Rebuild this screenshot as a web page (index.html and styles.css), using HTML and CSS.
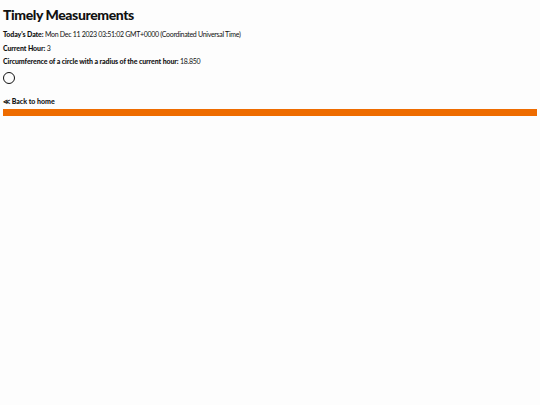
FILE: index.html
```html
<!DOCTYPE html>
<html>
<head>
<meta charset="utf-8">
<link rel="stylesheet" href="styles.css">
</head>
<body>
<main class="page">
  <h1 class="title">Timely Measurements</h1>
  <p class="line"><b>Today's Date:</b> Mon Dec 11 2023 03:51:02 GMT+0000 (Coordinated Universal Time)</p>
  <p class="line"><b>Current Hour:</b> 3</p>
  <p class="line"><b>Circumference of a circle with a radius of the current hour:</b> 18.850</p>
  <div class="circle"></div>
  <a class="back" href="#">&#x226A; Back to home</a>
  <div class="bar"></div>
</main>
</body>
</html>
```

FILE: styles.css
```css
html, body {
  margin: 0;
  padding: 0;
  background: #fdfdfd;
}
.page {
  padding: 6px 3px;
  font-family: Lato, "Liberation Sans", sans-serif;
  color: #111;
  display: flex;
  flex-direction: column;
  align-items: flex-start;
}
.title {
  font-size: 14px;
  letter-spacing: -0.4px;
  font-weight: 900;
  margin: 0 0 6px;
  line-height: 18px;
}
.line {
  font-size: 7px;
  letter-spacing: -0.3px;
  margin: 0 0 4.5px;
  line-height: 9px;
}
.line b {
  font-weight: 900;
  letter-spacing: -0.1px;
}
.circle {
  width: 10px;
  height: 10px;
  border: 1.6px solid #111;
  border-radius: 50%;
  margin: 1px 0 0 0;
}
.back {
  font-size: 7px;
  letter-spacing: 0;
  font-weight: 900;
  color: #111;
  text-decoration: none;
  margin-top: 13px;
  line-height: 9px;
}
.bar {
  align-self: stretch;
  height: 7px;
  background: #ee6c00;
  margin-top: 3px;
}
```
